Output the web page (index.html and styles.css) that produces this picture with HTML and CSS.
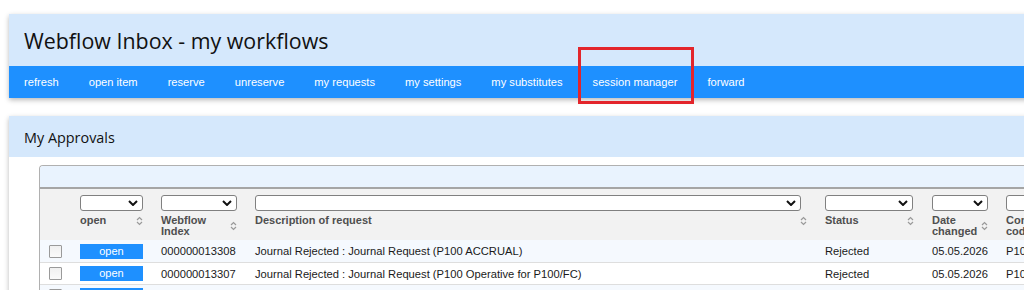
FILE: index.html
```html
<!DOCTYPE html>
<html lang="en">
<head>
<meta charset="utf-8">
<title>Webflow Inbox</title>
<link rel="stylesheet" href="styles.css">
</head>
<body>
<div class="panel top-panel">
  <div class="panel-head">
    <h1 class="page-title">Webflow Inbox - my workflows</h1>
  </div>
  <nav class="menu">
    <a class="menu-item">refresh</a>
    <a class="menu-item">open item</a>
    <a class="menu-item">reserve</a>
    <a class="menu-item">unreserve</a>
    <a class="menu-item">my requests</a>
    <a class="menu-item">my settings</a>
    <a class="menu-item">my substitutes</a>
    <a class="menu-item highlighted">session manager</a>
    <a class="menu-item">forward</a>
  </nav>
</div>

<div class="panel approvals">
  <div class="panel-head small">
    <h2 class="section-title">My Approvals</h2>
  </div>
  <div class="panel-body">
    <div class="grid">
      <div class="grid-toolbar"></div>
      <table class="grid-table">
        <colgroup>
          <col class="c-chk"><col class="c-open"><col class="c-idx"><col class="c-desc"><col class="c-status"><col class="c-date"><col class="c-co">
        </colgroup>
        <thead>
          <tr>
            <th></th>
            <th>
              <div class="filter w-open"><svg class="chev" viewBox="0 0 10 6" width="10" height="6"><path d="M1 1 L5 5 L9 1" /></svg></div>
              <div class="label-row"><span>open</span><svg class="sort" viewBox="0 0 7 10" width="7" height="10"><path d="M1 4 L3.5 1.5 L6 4 M1 6 L3.5 8.5 L6 6"/></svg></div>
            </th>
            <th>
              <div class="filter w-idx"><svg class="chev" viewBox="0 0 10 6" width="10" height="6"><path d="M1 1 L5 5 L9 1" /></svg></div>
              <div class="label-row"><span>Webflow<br>Index</span><svg class="sort" viewBox="0 0 7 10" width="7" height="10"><path d="M1 4 L3.5 1.5 L6 4 M1 6 L3.5 8.5 L6 6"/></svg></div>
            </th>
            <th>
              <div class="filter w-desc"><svg class="chev" viewBox="0 0 10 6" width="10" height="6"><path d="M1 1 L5 5 L9 1" /></svg></div>
              <div class="label-row"><span>Description of request</span><svg class="sort" viewBox="0 0 7 10" width="7" height="10"><path d="M1 4 L3.5 1.5 L6 4 M1 6 L3.5 8.5 L6 6"/></svg></div>
            </th>
            <th>
              <div class="filter w-status"><svg class="chev" viewBox="0 0 10 6" width="10" height="6"><path d="M1 1 L5 5 L9 1" /></svg></div>
              <div class="label-row"><span>Status</span><svg class="sort" viewBox="0 0 7 10" width="7" height="10"><path d="M1 4 L3.5 1.5 L6 4 M1 6 L3.5 8.5 L6 6"/></svg></div>
            </th>
            <th>
              <div class="filter w-date"><svg class="chev" viewBox="0 0 10 6" width="10" height="6"><path d="M1 1 L5 5 L9 1" /></svg></div>
              <div class="label-row"><span>Date<br>changed</span><svg class="sort" viewBox="0 0 7 10" width="7" height="10"><path d="M1 4 L3.5 1.5 L6 4 M1 6 L3.5 8.5 L6 6"/></svg></div>
            </th>
            <th>
              <div class="filter w-co"><svg class="chev" viewBox="0 0 10 6" width="10" height="6"><path d="M1 1 L5 5 L9 1" /></svg></div>
              <div class="label-row"><span>Company<br>code</span></div>
            </th>
          </tr>
        </thead>
        <tbody>
          <tr class="alt">
            <td><span class="chk"></span></td>
            <td><span class="open-btn">open</span></td>
            <td>000000013308</td>
            <td>Journal Rejected : Journal Request (P100 ACCRUAL)</td>
            <td>Rejected</td>
            <td>05.05.2026</td>
            <td>P100</td>
          </tr>
          <tr>
            <td><span class="chk"></span></td>
            <td><span class="open-btn">open</span></td>
            <td>000000013307</td>
            <td>Journal Rejected : Journal Request (P100 Operative for P100/FC)</td>
            <td>Rejected</td>
            <td>05.05.2026</td>
            <td>P100</td>
          </tr>
          <tr class="alt">
            <td><span class="chk"></span></td>
            <td><span class="open-btn">open</span></td>
            <td>000000013306</td>
            <td>Journal Rejected : Journal Request (P100 ACCRUAL)</td>
            <td>Rejected</td>
            <td>05.05.2026</td>
            <td>P100</td>
          </tr>
        </tbody>
      </table>
    </div>
  </div>
</div>
</body>
</html>
```

FILE: styles.css
```css
html, body {
  margin: 0;
  padding: 0;
  overflow: hidden;
  background: #ffffff;
}

body {
  font-family: "Liberation Sans", Arial, sans-serif;
  font-size: 11.2px;
  color: #222222;
}

.panel {
  margin: 0 -40px 0 9px;
  background: #ffffff;
  box-shadow: 0 2px 5px rgba(0, 0, 0, 0.28);
}

.top-panel {
  margin-top: 14px;
}

.approvals {
  margin-top: 18px;
  height: 400px;
}

.panel-head {
  background: #d5e8fc;
  height: 52px;
  box-sizing: border-box;
  display: flex;
  align-items: center;
  padding-left: 15px;
  padding-top: 1px;
}

.panel-head.small {
  height: 41px;
  padding-top: 3px;
}

.page-title {
  margin: 0;
  font-family: "Open Sans", "Noto Sans", sans-serif;
  font-weight: 400;
  font-size: 21.4px;
  line-height: 1;
  color: #111111;
}

.section-title {
  margin: 0;
  font-family: "Open Sans", "Noto Sans", sans-serif;
  font-weight: 400;
  font-size: 14.4px;
  line-height: 1;
  color: #111111;
}

.menu {
  display: flex;
  height: 32px;
  background: #1e90ff;
}

.menu-item {
  position: relative;
  padding: 0 15px;
  line-height: 32px;
  color: #ffffff;
  font-size: 11.15px;
  white-space: nowrap;
  cursor: pointer;
}

.menu-item.highlighted::after {
  content: "";
  position: absolute;
  left: 0;
  right: -2px;
  top: -19px;
  bottom: -6px;
  border: 3px solid #e3252b;
}

.panel-body {
  padding: 8px 0 0 30px;
}

.grid {
  width: 1160px;
  border: 1px solid #b0b0b0;
  border-right: none;
  border-bottom: none;
  border-top-left-radius: 4px;
  overflow: hidden;
}

.grid-toolbar {
  height: 21px;
  background: #e9f3fe;
  border-bottom: 2px solid #a5a5a5;
}

.grid-table {
  border-collapse: collapse;
  table-layout: fixed;
  width: 1159px;
}

.c-chk { width: 31px; }
.c-open { width: 81px; }
.c-idx { width: 94px; }
.c-desc { width: 570px; }
.c-status { width: 107px; }
.c-date { width: 74px; }
.c-co { width: 202px; }

.grid-table th {
  background: #f2f2f2;
  height: 51px;
  padding: 6px 9px 0;
  vertical-align: top;
  text-align: left;
  box-sizing: border-box;
}

.filter {
  box-sizing: border-box;
  height: 16px;
  border: 1px solid #808080;
  border-radius: 3px;
  background: #ffffff;
  display: flex;
  justify-content: flex-end;
  align-items: center;
  padding-right: 4px;
}

.w-open { width: 63px; }
.w-idx { width: 76px; }
.w-desc { width: 546px; }
.w-status { width: 88px; }
.w-date { width: 56px; }
.w-co { width: 80px; }

.chev {
  display: block;
}

.chev path {
  fill: none;
  stroke: #111111;
  stroke-width: 2;
}

.label-row {
  display: flex;
  justify-content: space-between;
  align-items: center;
  margin-top: 4px;
  font-weight: bold;
  font-size: 11px;
  line-height: 11px;
  color: #4f4f4f;
}

.sort {
  display: block;
  flex: none;
}

.sort path {
  fill: none;
  stroke: #9a9a9a;
  stroke-width: 1.2;
}

.grid-table td {
  height: 22px;
  padding: 1px 9px 0;
  box-sizing: border-box;
  border-bottom: 1px solid #dedede;
  vertical-align: middle;
  white-space: nowrap;
  overflow: hidden;
  color: #1a1a1a;
}

.grid-table tr.alt td {
  background: #f5f9fe;
}

.chk {
  display: block;
  box-sizing: border-box;
  width: 13px;
  height: 13px;
  border: 1px solid #9a9a9a;
  border-radius: 1px;
  background: linear-gradient(#f0f0f0, #fafafa);
}

.open-btn {
  display: block;
  width: 63px;
  height: 15px;
  line-height: 15px;
  font-size: 11px;
  background: #1e90ff;
  color: #ffffff;
  text-align: center;
}
```
